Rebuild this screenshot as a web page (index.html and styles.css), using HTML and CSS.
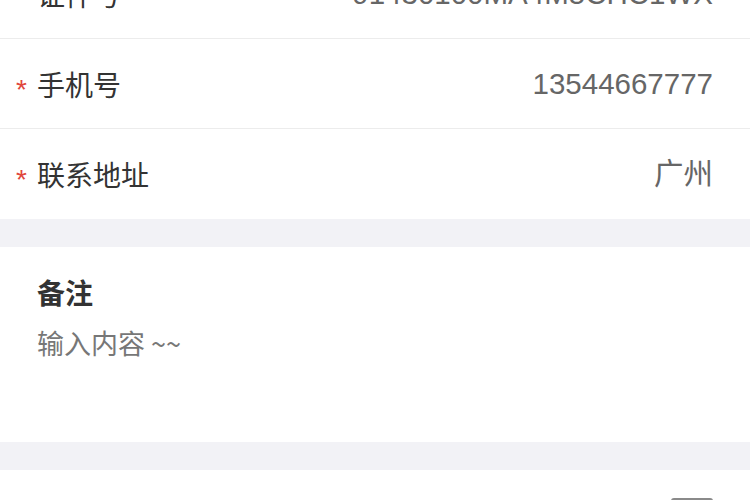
FILE: index.html
```html
<!DOCTYPE html>
<html lang="zh-CN">
<head>
<meta charset="utf-8">
<title>表单</title>
<link rel="stylesheet" href="styles.css">
</head>
<body>
<div class="page">
  <div class="form-list">
    <div class="row row-first">
      <span class="req">*</span>
      <span class="label">证件号</span>
      <span class="value">91430100MA4M5CHC1WX</span>
    </div>
    <div class="row">
      <span class="req">*</span>
      <span class="label">手机号</span>
      <span class="value">13544667777</span>
    </div>
    <div class="row row-last">
      <span class="req">*</span>
      <span class="label">联系地址</span>
      <span class="value">广州</span>
    </div>
  </div>
  <div class="gap"></div>
  <div class="remark">
    <div class="remark-title">备注</div>
    <div class="remark-input">输入内容 ~~</div>
  </div>
  <div class="gap"></div>
  <div class="bottom">
    <div class="bottom-icon"></div>
  </div>
</div>
</body>
</html>
```
FILE: styles.css
```css
html, body {
  margin: 0;
  padding: 0;
  background: #ffffff;
  overflow: hidden;
}
.page {
  width: 750px;
  font-family: "Liberation Sans", "Noto Sans CJK SC", sans-serif;
}
.form-list {
  display: flex;
  flex-direction: column;
}
.row {
  box-sizing: border-box;
  height: 90px;
  display: flex;
  align-items: center;
  padding: 0 37px 0 16px;
  border-bottom: 1px solid #ececec;
}
.row-first {
  margin-top: -51px;
}
.row-last {
  border-bottom: none;
}
.req {
  width: 21px;
  color: #e0463c;
  font-size: 28px;
  line-height: 1;
  transform: translateY(6px);
}
.label {
  font-family: "Noto Sans CJK SC", sans-serif;
  font-size: 28px;
  color: #333333;
  line-height: 40px;
}
.value {
  margin-left: auto;
  font-size: 29.5px;
  color: #666666;
  line-height: 40px;
  font-family: "Liberation Sans", "Noto Sans CJK SC", sans-serif;
}
.gap {
  height: 28px;
  background: #f2f2f6;
}
.remark {
  box-sizing: border-box;
  height: 195px;
  padding: 25px 37px;
  display: flex;
  flex-direction: column;
}
.remark-title {
  font-family: "Noto Sans CJK SC", sans-serif;
  font-weight: bold;
  font-size: 28px;
  line-height: 40px;
  color: #333333;
}
.remark-input {
  margin-top: 11px;
  font-family: "Noto Sans CJK SC", sans-serif;
  font-size: 27px;
  line-height: 40px;
  color: #777777;
}
.bottom {
  height: 60px;
  display: flex;
  justify-content: flex-end;
  padding: 28px 37px 0 0;
}
.bottom-icon {
  width: 42px;
  height: 20px;
  border-radius: 3px;
  background: #8a8a8a;
}
```
